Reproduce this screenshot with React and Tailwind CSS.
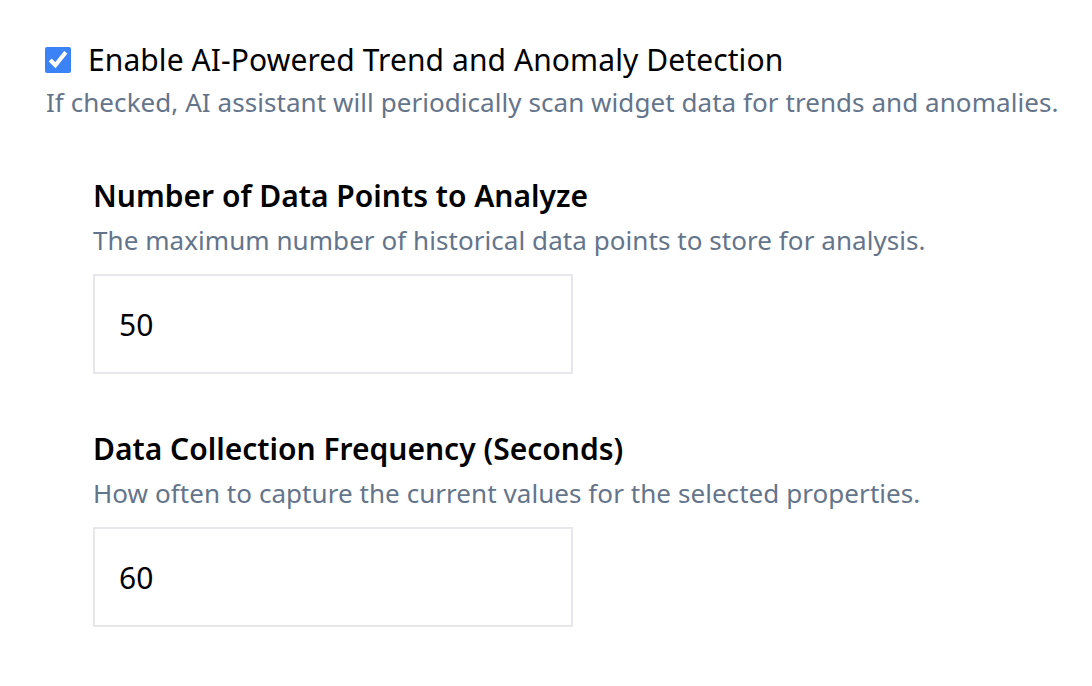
export default function App() {
  return (
    <div className="min-h-screen bg-white pt-[38px] pl-[45px]" style={{ fontFamily: '"Segoe UI", "Noto Sans", sans-serif' }}>
      <label className="flex items-center gap-[17px] h-[44px]">
        <input type="checkbox" defaultChecked className="w-[26px] h-[26px] accent-[#3b82f6] m-0" />
        <span className="text-[30px] leading-[44px] tracking-[0.09px] text-black">Enable AI-Powered Trend and Anomaly Detection</span>
      </label>
      <p className="text-[26px] leading-[42px] tracking-[0.06px] text-[#64748b] pl-[1px] -mt-[1px]">If checked, AI assistant will periodically scan widget data for trends and anomalies.</p>
      <div className="pl-[48px] pt-[50px]">
        <h3 className="text-[30px] leading-[46px] font-semibold text-black">Number of Data Points to Analyze</h3>
        <p className="text-[26px] leading-[42px] tracking-[0.06px] text-[#64748b]">The maximum number of historical data points to store for analysis.</p>
        <input type="text" defaultValue="50" className="mt-[13px] block w-[480px] h-[100px] border-2 border-[#e5e7eb] px-[24px] text-[30px] text-black outline-none" />
        <h3 className="mt-[52px] text-[30px] leading-[46px] font-semibold text-black">Data Collection Frequency (Seconds)</h3>
        <p className="text-[26px] leading-[42px] tracking-[0.06px] text-[#64748b]">How often to capture the current values for the selected properties.</p>
        <input type="text" defaultValue="60" className="mt-[13px] block w-[480px] h-[100px] border-2 border-[#e5e7eb] px-[24px] text-[30px] text-black outline-none" />
      </div>
    </div>
  );
}
